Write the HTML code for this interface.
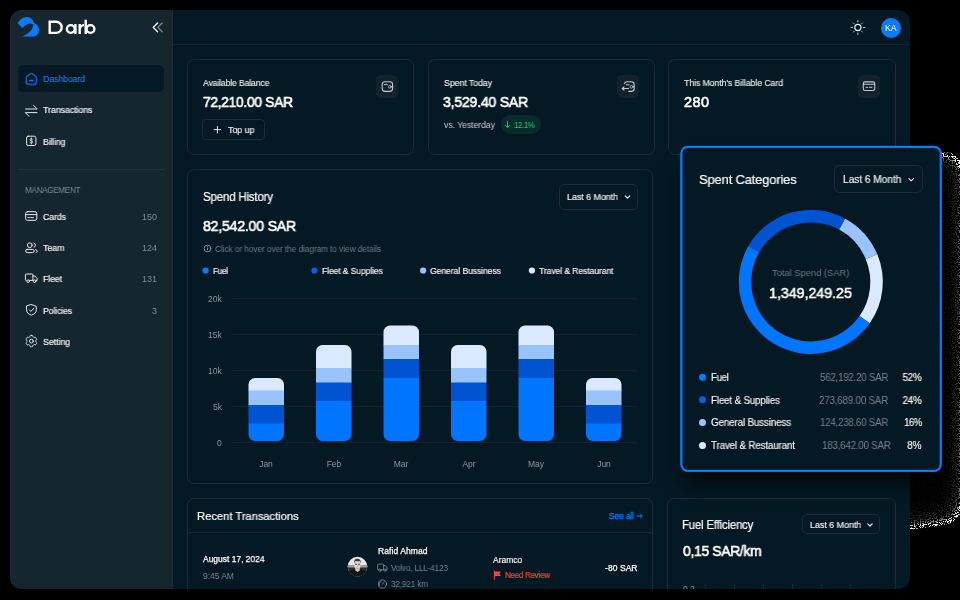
<!DOCTYPE html>
<html><head><meta charset="utf-8"><title>Darb</title><style>
html,body{margin:0;padding:0;background:#000;}
body{width:960px;height:600px;position:relative;overflow:hidden;font-family:"Liberation Sans",sans-serif;}
#app{position:absolute;left:0;top:0;width:960px;height:600px;clip-path:inset(10px 50px 11px 10px round 12px);background:#041923;}
.a{position:absolute;box-sizing:border-box}
.t{position:absolute;white-space:nowrap;will-change:transform}
#side{left:10px;top:10px;width:163px;height:579px;background:#15262f;border-right:1px solid #1d2e37}
.card{border:1px solid #1d2c34;border-radius:7px}
.ib{width:22px;height:22.5px;top:75px;border-radius:5px;background:#13232c}
.dd{border:1px solid #1d2d36;border-radius:5px}
svg{position:absolute;overflow:visible}
.ic{fill:none;stroke:#e6eaec;stroke-width:1;stroke-linecap:round;stroke-linejoin:round}
#panel{left:681px;top:146.500px;width:260px;height:325px;border-radius:8px;background:#041923;box-shadow:0 16px 22px -5px rgba(0,0,0,.72)}

</style></head><body>
<!--NOISE-->
<svg width="960" height="600" style="left:0;top:0" viewBox="0 0 960 600">
 <defs>
  <filter id="nz" x="850" y="120" width="140" height="440" filterUnits="userSpaceOnUse" color-interpolation-filters="sRGB">
   <feGaussianBlur in="SourceAlpha" stdDeviation="4.2" result="B1"/>
   <feComponentTransfer in="B1" result="P"><feFuncA type="linear" slope="-2" intercept="2"/></feComponentTransfer>
   <feGaussianBlur in="SourceAlpha" stdDeviation="13" result="B2"/>
   <feComponentTransfer in="B2" result="Q"><feFuncA type="linear" slope="-2" intercept="2"/></feComponentTransfer>
   <feComposite in="P" in2="Q" operator="arithmetic" k1="0" k2="1.5" k3="0.25" k4="0.02" result="I"/>
   <feTurbulence type="fractalNoise" baseFrequency="0.78" numOctaves="1" seed="11" result="T"/>
   <feColorMatrix in="T" type="matrix" values="0 0 0 0 1  0 0 0 0 1  0 0 0 0 1  40 0 0 0 -21" result="N"/>
   <feComposite in="N" in2="I" operator="arithmetic" k1="1" k2="0" k3="0" k4="0" result="D"/>
   <feFlood flood-color="#ffffff" result="W"/>
   <feComposite in="W" in2="D" operator="in" result="WD"/>
   <feComposite in="WD" in2="SourceAlpha" operator="in"/>
  </filter>
 </defs>
 <path d="M870,152.5 L948,152.5 C956,153 962,160 966,175 L966,495 C964,512 956,522 948,524 L932,527 L910,529.5 L870,529.5 Z" fill="#fff" filter="url(#nz)"/>
</svg><!--/NOISE-->
<div id="app" class="a">
  <div id="side" class="a"></div>
  <div class="a" style="left:173px;top:44px;width:737px;height:1px;background:#15262e"></div>
  <div class="a" style="left:18px;top:65px;width:146px;height:27px;border-radius:5px;background:#041923;border:1px solid #061b25"></div>
  <div class="a" style="left:18px;top:169px;width:147px;height:1px;background:#22333b"></div>

  <div id="kacirc" class="a" style="left:880.5px;top:17.5px;width:20px;height:20px;border-radius:10px;background:#0a7aff"></div>
  <!-- stat cards -->
  <div class="a card" style="left:187px;top:59px;width:227px;height:96px"></div>
  <div class="a card" style="left:428px;top:59px;width:227px;height:96px"></div>
  <div class="a card" style="left:668px;top:59px;width:228px;height:96px"></div>
  <div class="a ib" style="left:376px"></div>
  <div class="a ib" style="left:617px"></div>
  <div class="a ib" style="left:858px"></div>
  <div class="a dd" style="left:202px;top:119px;width:63px;height:21px;border-radius:4px"></div>
  <div class="a" style="left:500.7px;top:115px;width:40px;height:19px;border-radius:10px;background:#0a2a2b"></div>

  <!-- spend history -->
  <div class="a card" style="left:187px;top:169px;width:466px;height:315px"></div>
  <div class="a dd" style="left:559px;top:184px;width:78.5px;height:26px"></div>
  <svg width="960" height="600" style="left:0;top:0" viewBox="0 0 960 600">
    <g stroke="#12242d" stroke-width="1">
      <line x1="232.5" x2="637.5" y1="298.5" y2="298.5"/><line x1="232.5" x2="637.5" y1="334.5" y2="334.5"/>
      <line x1="232.5" x2="637.5" y1="370.5" y2="370.5"/><line x1="232.5" x2="637.5" y1="406.5" y2="406.5"/>
      <line x1="232.5" x2="637.5" y1="442.5" y2="442.5"/>
    </g>
    <defs>
      <clipPath id="b1"><rect x="248.5" y="378" width="35.5" height="63" rx="6.5"/></clipPath>
      <clipPath id="b2"><rect x="316" y="345" width="35.5" height="96" rx="6.5"/></clipPath>
      <clipPath id="b3"><rect x="383.5" y="325.5" width="35.5" height="115.5" rx="6.5"/></clipPath>
      <clipPath id="b4"><rect x="451" y="345" width="35.5" height="96" rx="6.5"/></clipPath>
      <clipPath id="b5"><rect x="518.5" y="325.5" width="35.5" height="115.5" rx="6.5"/></clipPath>
      <clipPath id="b6"><rect x="586" y="378" width="35.5" height="63" rx="6.5"/></clipPath>
    </defs>
    <g clip-path="url(#b1)"><rect x="248" y="378" width="37" height="13" fill="#dbe9ff"/><rect x="248" y="390.5" width="37" height="15" fill="#99c3ff"/><rect x="248" y="405" width="37" height="19" fill="#0054d1"/><rect x="248" y="423.5" width="37" height="18" fill="#0075ff"/></g>
    <g clip-path="url(#b6)"><rect x="585" y="378" width="37" height="13" fill="#dbe9ff"/><rect x="585" y="390.5" width="37" height="15" fill="#99c3ff"/><rect x="585" y="405" width="37" height="19" fill="#0054d1"/><rect x="585" y="423.5" width="37" height="18" fill="#0075ff"/></g>
    <g clip-path="url(#b2)"><rect x="315" y="344" width="37" height="24.5" fill="#dbe9ff"/><rect x="315" y="368" width="37" height="15" fill="#99c3ff"/><rect x="315" y="382.5" width="37" height="19" fill="#0054d1"/><rect x="315" y="401" width="37" height="41" fill="#0075ff"/></g>
    <g clip-path="url(#b4)"><rect x="450" y="344" width="37" height="24.5" fill="#dbe9ff"/><rect x="450" y="368" width="37" height="15" fill="#99c3ff"/><rect x="450" y="382.5" width="37" height="19" fill="#0054d1"/><rect x="450" y="401" width="37" height="41" fill="#0075ff"/></g>
    <g clip-path="url(#b3)"><rect x="383" y="325" width="37" height="20.5" fill="#dbe9ff"/><rect x="383" y="345" width="37" height="14.5" fill="#99c3ff"/><rect x="383" y="359" width="37" height="19.5" fill="#0054d1"/><rect x="383" y="378" width="37" height="64" fill="#0075ff"/></g>
    <g clip-path="url(#b5)"><rect x="518" y="325" width="37" height="20.5" fill="#dbe9ff"/><rect x="518" y="345" width="37" height="14.5" fill="#99c3ff"/><rect x="518" y="359" width="37" height="19.5" fill="#0054d1"/><rect x="518" y="378" width="37" height="64" fill="#0075ff"/></g>
    <!-- legend dots -->
    <circle cx="205.6" cy="270.5" r="3.1" fill="#0a7aff"/><circle cx="314.4" cy="270.5" r="3.1" fill="#0a5fe0"/>
    <circle cx="423.1" cy="270.5" r="3.1" fill="#99c3ff"/><circle cx="531.9" cy="270.5" r="3.1" fill="#dcebff"/>
  </svg>

  <!-- transactions -->
  <div class="a card" style="left:187px;top:498px;width:466px;height:130px"></div>
  <div class="a" style="left:188px;top:532px;width:464px;height:1px;background:#18282f"></div>
  <!-- fuel -->
  <div class="a card" style="left:667px;top:498px;width:229px;height:130px"></div>
  <div class="a dd" style="left:802.2px;top:514.4px;width:78px;height:20px"></div>
  <!--ICONS_UNDER-->
<svg width="960" height="600" style="left:0;top:0" viewBox="0 0 960 600">
 <!-- logo -->
 <path d="M17.5,23 C20,19 23,17 26.5,17 C30.5,17 33,19.5 34,23 C37,24 39,26.5 39,30 C39,34 36.5,36.5 33,36.5 L22,36.5 C28,34 33,30.5 33.3,24.5 C30,22 26,24 22.5,28 Z" fill="#0a7aff"/>
 <g fill="none" stroke="#fff" stroke-width="2.4">
  <path d="M49.7,21.7 H56.1 a5.6,5.6 0 0 1 5.600,5.600 a5.600,5.600 0 0 1 -5.600,5.600 H49.7 Z" stroke-linejoin="miter"/>
  <circle cx="70.8" cy="29" r="3.9"/><path d="M75.400,23.900 V34.100"/>
  <path d="M79.700,23.900 V34.100 M79.700,29.300 a4.200,4.200 0 0 1 4.300,-4.200"/>
  <path d="M85.700,19.800 V34.100"/><circle cx="90.500" cy="29" r="3.900"/>
 </g>
 <!-- collapse chevrons -->
 <path class="ic" d="M157.6,23 L153.2,27.35 L157.6,31.7" style="stroke:#fff;stroke-width:1.3"/>
 <path class="ic" d="M162.2,23 L157.8,27.35 L162.2,31.7" style="stroke:#7d8990;stroke-width:1.3"/>
 <!-- dashboard -->
 <path class="ic" d="M26.2,78.1 Q26.2,77 27.1,76.3 L29.9,74 Q31.3,72.9 32.7,74 L35.5,76.3 Q36.4,77 36.4,78.1 V81.9 a2.3,2.3 0 0 1 -2.3,2.3 H28.5 a2.3,2.3 0 0 1 -2.3,-2.3 Z M29.5,80.4 H33.1" style="stroke:#0a7aff;stroke-width:1.1"/>
 <!-- transactions -->
 <path class="ic" d="M25.6,109 H37.2 L33.6,105.4 M37,112.6 H25.3 L28.9,116.2"/>
 <!-- billing -->
 <rect class="ic" x="26.6" y="136.2" width="9.3" height="9.3" rx="1.6"/>
 <path class="ic" d="M32.6,139.3 q-0.3,-0.7 -1.3,-0.7 q-1.3,0 -1.3,1.1 q0,0.9 1.3,1.1 q1.4,0.2 1.4,1.2 q0,1.1 -1.4,1.1 q-1.1,0 -1.4,-0.8 M31.3,137.9 v6" style="stroke-width:.8"/>
 <!-- cards -->
 <rect class="ic" x="25.6" y="211.7" width="11.2" height="8.6" rx="1.8"/>
 <path class="ic" d="M25.6,214.6 H36.8 M28,217.6 h1.3 M30.8,217.6 h2.6"/>
 <!-- team -->
 <circle class="ic" cx="29.8" cy="245.2" r="2.4"/><rect class="ic" x="25.6" y="249.4" width="8.6" height="3.2" rx="1.6"/>
 <path class="ic" d="M33.8,243 a2.3,2.3 0 0 1 0.3,4.3 M35.6,249.6 q1.6,0.4 1.6,1.6 q0,1 -1.1,1.3"/>
 <!-- fleet -->
 <path class="ic" d="M26.4,280.4 h-0.3 a0.7,0.7 0 0 1 -0.7,-0.7 v-4.9 a0.8,0.8 0 0 1 0.8,-0.8 h5.9 a0.8,0.8 0 0 1 0.8,0.8 v5.6 h-3.2 M32.9,276 h2 l2.2,2.5 v1.9 h-0.8 "/>
 <circle class="ic" cx="28.2" cy="281.2" r="1.3"/><circle class="ic" cx="34.6" cy="281.2" r="1.3"/>
 <!-- policies -->
 <path class="ic" d="M31.4,304.6 l4.9,1.7 v3.5 c0,2.8 -2,4.3 -4.9,5.4 c-2.9,-1.1 -4.9,-2.6 -4.9,-5.4 v-3.5 Z M29.4,309.9 l1.5,1.5 l2.8,-3"/>
 <!-- setting -->
 <path class="ic" d="M31.40,335.40 L31.77,335.41 L32.14,335.45 L32.49,335.60 L32.72,336.17 L32.88,336.75 L33.12,336.94 L33.39,337.06 L33.65,337.20 L33.90,337.36 L34.14,337.53 L34.43,337.65 L35.01,337.49 L35.61,337.40 L35.92,337.63 L36.14,337.93 L36.34,338.25 L36.51,338.58 L36.67,338.92 L36.71,339.30 L36.33,339.78 L35.91,340.20 L35.86,340.51 L35.89,340.81 L35.90,341.10 L35.89,341.39 L35.86,341.69 L35.91,342.00 L36.33,342.42 L36.71,342.90 L36.67,343.28 L36.51,343.62 L36.34,343.95 L36.14,344.27 L35.92,344.57 L35.61,344.80 L35.01,344.71 L34.43,344.55 L34.14,344.67 L33.90,344.84 L33.65,345.00 L33.39,345.14 L33.12,345.26 L32.88,345.45 L32.72,346.03 L32.49,346.60 L32.14,346.75 L31.77,346.79 L31.40,346.80 L31.03,346.79 L30.66,346.75 L30.31,346.60 L30.08,346.03 L29.92,345.45 L29.68,345.26 L29.41,345.14 L29.15,345.00 L28.90,344.84 L28.66,344.67 L28.37,344.55 L27.79,344.71 L27.19,344.80 L26.88,344.57 L26.66,344.27 L26.46,343.95 L26.29,343.62 L26.13,343.28 L26.09,342.90 L26.47,342.42 L26.89,342.00 L26.94,341.69 L26.91,341.39 L26.90,341.10 L26.91,340.81 L26.94,340.51 L26.89,340.20 L26.47,339.78 L26.09,339.30 L26.13,338.92 L26.29,338.58 L26.46,338.25 L26.66,337.93 L26.88,337.63 L27.19,337.40 L27.79,337.49 L28.37,337.65 L28.66,337.53 L28.90,337.36 L29.15,337.20 L29.41,337.06 L29.68,336.94 L29.92,336.75 L30.08,336.17 L30.31,335.60 L30.66,335.45 L31.03,335.41Z"/><circle class="ic" cx="31.4" cy="341.1" r="1.9"/>
 <!-- sun -->
 <circle class="ic" cx="857.9" cy="27.5" r="3.1" style="stroke-width:1.2"/><g class="ic" style="stroke-width:1;stroke:#b4bcc1"><line x1="857.90" y1="22.00" x2="857.90" y2="20.50"/><line x1="861.65" y1="23.75" x2="862.50" y2="22.90"/><line x1="863.40" y1="27.50" x2="864.90" y2="27.50"/><line x1="861.65" y1="31.25" x2="862.50" y2="32.10"/><line x1="857.90" y1="33.00" x2="857.90" y2="34.50"/><line x1="854.15" y1="31.25" x2="853.30" y2="32.10"/><line x1="852.40" y1="27.50" x2="850.90" y2="27.50"/><line x1="854.15" y1="23.75" x2="853.30" y2="22.90"/></g>
 <!-- wallet -->
 <g class="ic" style="stroke:#c2c9cd;stroke-width:1.1">
  <rect x="382.2" y="81.7" width="10.4" height="9.7" rx="2.8"/><path d="M384.6,84.5 h2.6 M392.6,86.8 h-1.6"/><circle cx="389.8" cy="86.8" r="1.35" style="stroke-width:.8"/>
  <path d="M624.4,83.6 a2.6,2.6 0 0 1 2.4,-1.8 h4.6 a2.8,2.8 0 0 1 2.8,2.8 v4 a2.8,2.8 0 0 1 -2.8,2.8 h-2.6 M626.4,84.8 h2.6 M628.6,88.5 h-6.4 l1.8,-1.7 M622.2,88.5 l1.8,1.7 M634.2,86.8 h-1.6"/><circle cx="631.4" cy="86.8" r="1.35" style="stroke-width:.8"/>
  <rect x="863.3" y="81.9" width="11.4" height="8.6" rx="1.8"/><path d="M863.3,84.3 H874.7 M866,87.3 h1.6 M869.3,87.3 h2.6"/>
 </g>
 <!-- plus -->
 <path class="ic" d="M214.1,129.6 h6.6 M217.4,126.3 v6.6"/>
 <!-- green arrow -->
 <path class="ic" d="M507.5,121.4 V127.5 M505.2,125.3 L507.5,127.6 L509.8,125.3" style="stroke:#22c55e;stroke-width:1"/>
 <!-- info -->
 <circle class="ic" cx="207.5" cy="248.5" r="3.3" style="stroke:#8b979e;stroke-width:.9"/><path class="ic" d="M207.5,248 v2 M207.5,246.6 v.1" style="stroke:#8b979e;stroke-width:.9"/>
 <!-- chevrons down -->
 <path class="ic" d="M625.3,196 l2.2,2.2 l2.2,-2.2" style="stroke-width:1.2"/>
 <path class="ic" d="M867.8,523.8 l2.2,2.2 l2.2,-2.2" style="stroke-width:1.2"/>
 <!-- see all arrow -->
 <path class="ic" d="M637.2,516 h5 M640.3,514 l2,2 l-2,2" style="stroke:#0a7aff;stroke-width:1"/>
 <!-- truck small -->
 <g class="ic" style="stroke:#7a868e;stroke-width:.9">
  <path d="M378.6,569.9 h-0.4 a0.5,0.5 0 0 1 -0.5,-0.5 v-4.6 a0.7,0.7 0 0 1 0.7,-0.7 h4.5 a0.7,0.7 0 0 1 0.7,0.7 v5.1 h-2.5 M383.6,565.6 h1.6 l1.8,2.1 v2.2 h-0.6"/>
  <circle cx="379.9" cy="570.2" r="1.1"/><circle cx="385.1" cy="570.2" r="1.1"/>
  <circle cx="382.5" cy="584" r="4.1"/><path d="M382.5,584.3 l1.5,-2.2 M379.6,585.6 a3,3 0 0 1 1.4,-4.2"/>
 </g>
 <!-- flag -->
 <path d="M494.4,571.4 h6.6 l-1.6,2.3 l1.6,2.3 h-6.6 Z" fill="#f0483e"/><path d="M494.4,571 V579.4" stroke="#f0483e" stroke-width="1" stroke-linecap="round"/>
 <!-- avatar -->
 <defs><clipPath id="av"><circle cx="357.5" cy="566.6" r="9.8"/></clipPath></defs>
 <g clip-path="url(#av)">
  <rect x="347" y="556" width="21" height="21" fill="#e6e6e6"/>
  <rect x="347" y="565" width="21" height="3" fill="#9a9a9a"/>
  <rect x="347" y="567.500" width="21" height="10" fill="#2b2c2d"/>
  <path d="M347,577 v-5 q3.500,-2.300 7,-2.600 l3.500,2 l3.500,-2 q3.500,0.300 7,2.600 v5 Z" fill="#141516"/>
  <path d="M355.300,567.500 h4.400 v3 l-2.200,1.600 l-2.200,-1.600 Z" fill="#c9c9c9"/>
  <ellipse cx="357.400" cy="564.600" rx="3.500" ry="4.700" fill="#d2d2d2"/>
  <path d="M353.900,563.600 q-0.300,-4.800 3.500,-4.800 q3.800,0 3.500,4.800 q-0.600,-2.200 -1.400,-2.500 q-2.100,0.500 -4.200,0 q-0.800,0.300 -1.400,2.500 Z" fill="#3a3a3b"/>
  <path d="M355,564.300 h1.900 M358,564.300 h1.900" stroke="#3f3f40" stroke-width="0.900"/>
  <path d="M356.300,568.200 h2.200" stroke="#7d7d7d" stroke-width="0.600"/>
 </g>
 <!-- fuel ticks -->
 <g stroke="#1a2a32" stroke-width="1"><line x1="705.5" x2="705.5" y1="583.500" y2="590"/><line x1="734.500" x2="734.500" y1="583.500" y2="590"/><line x1="763.500" x2="763.500" y1="583.500" y2="590"/><line x1="792.500" x2="792.500" y1="583.500" y2="590"/><line x1="821.500" x2="821.500" y1="583.500" y2="590"/><line x1="850.500" x2="850.500" y1="583.500" y2="590"/></g>
</svg><!--/ICONS_UNDER-->
  <span class="t" id="t0" style="top:71.70px;font-size:9px;line-height:14px;color:#0a7aff;-webkit-text-stroke:0.15px #0a7aff;letter-spacing:-0.114px;transform:scaleX(0.9788);transform-origin:0 50%;left:42.8px;">Dashboard</span><span class="t" id="t1" style="top:103.40px;font-size:9px;line-height:14px;color:#f4f6f7;-webkit-text-stroke:0.15px #f4f6f7;letter-spacing:-0.077px;transform:scaleX(0.9832);transform-origin:0 50%;left:43px;">Transactions</span><span class="t" id="t2" style="top:134.80px;font-size:9px;line-height:14px;color:#f4f6f7;-webkit-text-stroke:0.15px #f4f6f7;letter-spacing:-0.126px;transform:scaleX(0.9674);transform-origin:0 50%;left:43px;">Billing</span><span class="t" id="t3" style="top:183.10px;font-size:8.5px;line-height:14px;color:#7d8a92;letter-spacing:-0.301px;transform:scaleX(0.9534);transform-origin:0 50%;left:25px;">MANAGEMENT</span><span class="t" id="t4" style="top:209.90px;font-size:9px;line-height:14px;color:#f4f6f7;-webkit-text-stroke:0.15px #f4f6f7;letter-spacing:-0.127px;transform:scaleX(0.9784);transform-origin:0 50%;left:42.5px;">Cards</span><span class="t" id="t5" style="top:209.80px;font-size:9px;line-height:14px;color:#7d8a92;right:803.20px;">150</span><span class="t" id="t6" style="top:241.10px;font-size:9px;line-height:14px;color:#f4f6f7;-webkit-text-stroke:0.15px #f4f6f7;letter-spacing:-0.119px;transform:scaleX(0.9835);transform-origin:0 50%;left:42.5px;">Team</span><span class="t" id="t7" style="top:241.00px;font-size:9px;line-height:14px;color:#7d8a92;right:803.20px;">124</span><span class="t" id="t8" style="top:272.30px;font-size:9px;line-height:14px;color:#f4f6f7;-webkit-text-stroke:0.15px #f4f6f7;letter-spacing:-0.127px;transform:scaleX(0.9740);transform-origin:0 50%;left:42.5px;">Fleet</span><span class="t" id="t9" style="top:272.20px;font-size:9px;line-height:14px;color:#7d8a92;right:803.20px;">131</span><span class="t" id="t10" style="top:303.70px;font-size:9px;line-height:14px;color:#f4f6f7;-webkit-text-stroke:0.15px #f4f6f7;letter-spacing:-0.130px;transform:scaleX(0.9698);transform-origin:0 50%;left:42.5px;">Policies</span><span class="t" id="t11" style="top:303.60px;font-size:9px;line-height:14px;color:#7d8a92;right:803.20px;">3</span><span class="t" id="t12" style="top:334.80px;font-size:9px;line-height:14px;color:#f4f6f7;-webkit-text-stroke:0.15px #f4f6f7;letter-spacing:-0.069px;transform:scaleX(0.9849);transform-origin:0 50%;left:42.5px;">Setting</span><span class="t" id="t13" style="top:20.80px;font-size:8.8px;line-height:14px;color:#fff;letter-spacing:-0.125px;transform:scaleX(0.9892);transform-origin:0 50%;left:884.8px;">KA</span><span class="t" id="t14" style="top:76.10px;font-size:9px;line-height:14px;color:#f4f6f7;-webkit-text-stroke:0.1px #f4f6f7;letter-spacing:-0.156px;transform:scaleX(0.9638);transform-origin:0 50%;left:203px;">Available Balance</span><span class="t" id="t15" style="top:90.57px;font-size:14.5px;line-height:23px;color:#fff;-webkit-text-stroke:0.6px #fff;letter-spacing:-0.348px;transform:scaleX(0.9556);transform-origin:0 50%;left:202.8px;">72,210.00 SAR</span><span class="t" id="t16" style="top:122.70px;font-size:9px;line-height:14px;color:#f4f6f7;-webkit-text-stroke:0.15px #f4f6f7;letter-spacing:-0.073px;transform:scaleX(0.9863);transform-origin:0 50%;left:228.2px;">Top up</span><span class="t" id="t17" style="top:76.10px;font-size:9px;line-height:14px;color:#f4f6f7;-webkit-text-stroke:0.1px #f4f6f7;letter-spacing:-0.084px;transform:scaleX(0.9829);transform-origin:0 50%;left:443.6px;">Spent Today</span><span class="t" id="t18" style="top:90.57px;font-size:14.5px;line-height:23px;color:#fff;-webkit-text-stroke:0.6px #fff;letter-spacing:-0.227px;transform:scaleX(0.9715);transform-origin:0 50%;left:443.4px;">3,529.40 SAR</span><span class="t" id="t19" style="top:117.70px;font-size:9px;line-height:14px;color:#c3cacf;letter-spacing:-0.106px;transform:scaleX(0.9756);transform-origin:0 50%;left:443.6px;">vs. Yesterday</span><span class="t" id="t20" style="top:117.70px;font-size:8.8px;line-height:14px;color:#22c55e;-webkit-text-stroke:0.1px #22c55e;letter-spacing:-0.519px;transform:scaleX(0.9092);transform-origin:0 50%;left:514.2px;">12.1%</span><span class="t" id="t21" style="top:76.10px;font-size:9px;line-height:14px;color:#f4f6f7;-webkit-text-stroke:0.1px #f4f6f7;letter-spacing:-0.105px;transform:scaleX(0.9741);transform-origin:0 50%;left:684.3px;">This Month's Billable Card</span><span class="t" id="t22" style="top:90.57px;font-size:14.5px;line-height:23px;color:#fff;-webkit-text-stroke:0.6px #fff;letter-spacing:0.398px;left:684.1px;">280</span><span class="t" id="t23" style="top:187.84px;font-size:12px;line-height:19px;color:#fff;-webkit-text-stroke:0.2px #fff;letter-spacing:-0.224px;transform:scaleX(0.9630);transform-origin:0 50%;left:202.5px;">Spend History</span><span class="t" id="t24" style="top:214.87px;font-size:14.5px;line-height:23px;color:#fff;-webkit-text-stroke:0.6px #fff;letter-spacing:-0.215px;transform:scaleX(0.9731);transform-origin:0 50%;left:203px;">82,542.00 SAR</span><span class="t" id="t25" style="top:241.70px;font-size:8.5px;line-height:14px;color:#707d85;letter-spacing:-0.083px;transform:scaleX(0.9775);transform-origin:0 50%;left:215px;">Click or hover over the diagram to view details</span><span class="t" id="t26" style="top:190.10px;font-size:9px;line-height:14px;color:#f4f6f7;-webkit-text-stroke:0.15px #f4f6f7;letter-spacing:-0.047px;transform:scaleX(0.9900);transform-origin:0 50%;left:567px;">Last 6 Month</span><span class="t" id="t27" style="top:263.70px;font-size:9px;line-height:14px;color:#f4f6f7;-webkit-text-stroke:0.15px #f4f6f7;letter-spacing:-0.419px;transform:scaleX(0.9226);transform-origin:0 50%;left:213px;">Fuel</span><span class="t" id="t28" style="top:263.70px;font-size:9px;line-height:14px;color:#f4f6f7;-webkit-text-stroke:0.15px #f4f6f7;letter-spacing:-0.158px;transform:scaleX(0.9624);transform-origin:0 50%;left:321.75px;">Fleet &amp; Supplies</span><span class="t" id="t29" style="top:263.70px;font-size:9px;line-height:14px;color:#f4f6f7;-webkit-text-stroke:0.15px #f4f6f7;letter-spacing:-0.142px;transform:scaleX(0.9690);transform-origin:0 50%;left:430px;">General Bussiness</span><span class="t" id="t30" style="top:263.70px;font-size:9px;line-height:14px;color:#f4f6f7;-webkit-text-stroke:0.15px #f4f6f7;letter-spacing:-0.145px;transform:scaleX(0.9663);transform-origin:0 50%;left:539px;">Travel &amp; Restaurant</span><span class="t" id="t31" style="top:291.60px;font-size:8.5px;line-height:14px;color:#8b979e;right:738.00px;">20k</span><span class="t" id="t32" style="top:327.60px;font-size:8.5px;line-height:14px;color:#8b979e;right:738.00px;">15k</span><span class="t" id="t33" style="top:363.60px;font-size:8.5px;line-height:14px;color:#8b979e;right:738.00px;">10k</span><span class="t" id="t34" style="top:399.60px;font-size:8.5px;line-height:14px;color:#8b979e;right:738.00px;">5k</span><span class="t" id="t35" style="top:435.60px;font-size:8.5px;line-height:14px;color:#8b979e;right:738.00px;">0</span><span class="t" id="t36" style="top:457.10px;font-size:8.5px;line-height:14px;color:#8b979e;left:216.25px;width:100px;text-align:center;">Jan</span><span class="t" id="t37" style="top:457.10px;font-size:8.5px;line-height:14px;color:#8b979e;left:283.75px;width:100px;text-align:center;">Feb</span><span class="t" id="t38" style="top:457.10px;font-size:8.5px;line-height:14px;color:#8b979e;left:351.25px;width:100px;text-align:center;">Mar</span><span class="t" id="t39" style="top:457.10px;font-size:8.5px;line-height:14px;color:#8b979e;left:418.75px;width:100px;text-align:center;">Apr</span><span class="t" id="t40" style="top:457.10px;font-size:8.5px;line-height:14px;color:#8b979e;left:486.25px;width:100px;text-align:center;">May</span><span class="t" id="t41" style="top:457.10px;font-size:8.5px;line-height:14px;color:#8b979e;left:553.75px;width:100px;text-align:center;">Jun</span><span class="t" id="t42" style="top:507.23px;font-size:11.4px;line-height:18px;color:#fff;-webkit-text-stroke:0.2px #fff;letter-spacing:-0.057px;transform:scaleX(0.9901);transform-origin:0 50%;left:197.3px;">Recent Transactions</span><span class="t" id="t43" style="top:509.30px;font-size:8.5px;line-height:14px;color:#0a7aff;-webkit-text-stroke:0.35px #0a7aff;letter-spacing:-0.083px;transform:scaleX(0.9804);transform-origin:0 50%;left:609px;">See all</span><span class="t" id="t44" style="top:552.10px;font-size:8.5px;line-height:14px;color:#fff;-webkit-text-stroke:0.25px #fff;letter-spacing:-0.015px;transform:scaleX(0.9966);transform-origin:0 50%;left:202.5px;">August 17, 2024</span><span class="t" id="t45" style="top:568.60px;font-size:8.5px;line-height:14px;color:#76838b;letter-spacing:-0.057px;transform:scaleX(0.9889);transform-origin:0 50%;left:202.5px;">9:45 AM</span><span class="t" id="t46" style="top:543.80px;font-size:8.5px;line-height:14px;color:#fff;-webkit-text-stroke:0.25px #fff;letter-spacing:0.083px;left:377.5px;">Rafid Ahmad</span><span class="t" id="t47" style="top:560.60px;font-size:8.5px;line-height:14px;color:#76838b;letter-spacing:-0.159px;transform:scaleX(0.9624);transform-origin:0 50%;left:390.5px;">Volvo, LLL-4123</span><span class="t" id="t48" style="top:576.90px;font-size:8.5px;line-height:14px;color:#76838b;letter-spacing:-0.169px;transform:scaleX(0.9648);transform-origin:0 50%;left:390.5px;">32,921 km</span><span class="t" id="t49" style="top:552.60px;font-size:8.5px;line-height:14px;color:#fff;-webkit-text-stroke:0.15px #fff;letter-spacing:-0.030px;transform:scaleX(0.9949);transform-origin:0 50%;left:493px;">Aramco</span><span class="t" id="t50" style="top:568.30px;font-size:8.5px;line-height:14px;color:#f0483e;-webkit-text-stroke:0.2px #f0483e;letter-spacing:-0.278px;transform:scaleX(0.9418);transform-origin:0 50%;left:505px;">Need Review</span><span class="t" id="t51" style="top:560.60px;font-size:8.5px;line-height:14px;color:#fff;-webkit-text-stroke:0.25px #fff;letter-spacing:0.062px;left:605px;">-80 SAR</span><span class="t" id="t52" style="top:515.54px;font-size:12px;line-height:19px;color:#fff;-webkit-text-stroke:0.2px #fff;letter-spacing:-0.229px;transform:scaleX(0.9570);transform-origin:0 50%;left:682.4px;">Fuel Efficiency</span><span class="t" id="t53" style="top:540.07px;font-size:14.5px;line-height:23px;color:#fff;-webkit-text-stroke:0.6px #fff;letter-spacing:-0.341px;transform:scaleX(0.9584);transform-origin:0 50%;left:682.6px;">0,15 SAR/km</span><span class="t" id="t54" style="top:517.50px;font-size:9px;line-height:14px;color:#f4f6f7;-webkit-text-stroke:0.15px #f4f6f7;letter-spacing:-0.038px;transform:scaleX(0.9919);transform-origin:0 50%;left:809.8px;">Last 6 Month</span><span class="t" id="t55" style="top:581.90px;font-size:8.5px;line-height:14px;color:#8b979e;letter-spacing:-0.082px;transform:scaleX(0.9859);transform-origin:0 50%;left:683px;">0.2</span>
</div>

<div id="panel" class="a"></div>
<svg width="960" height="600" style="left:0;top:0" viewBox="0 0 960 600"><rect x="681.3" y="146.9" width="259.5" height="324" rx="6.6" fill="none" stroke="#0a7aff" stroke-width="2.2"/></svg>
<div class="a dd" style="left:834.2px;top:165.4px;width:88.4px;height:27.8px;border-radius:6px"></div>
<svg width="960" height="600" style="left:0;top:0" viewBox="0 0 960 600">
  <path d="M748.45,245.90 A72,72 0 0 1 845.16,218.63 L839.19,229.61 A59.5,59.5 0 0 0 759.27,252.15 Z" fill="#0054d1"/><path d="M845.16,218.63 A72,72 0 0 1 877.32,254.35 L865.77,259.13 A59.5,59.5 0 0 0 839.19,229.61 Z" fill="#99c3ff"/><path d="M877.32,254.35 A72,72 0 0 1 869.78,323.20 L859.54,316.03 A59.5,59.5 0 0 0 865.77,259.13 Z" fill="#dbe9ff"/><path d="M869.78,323.20 A72,72 0 0 1 748.45,245.90 L759.27,252.15 A59.5,59.5 0 0 0 859.54,316.03 Z" fill="#0075ff"/>
  <circle cx="702.5" cy="377.3" r="3.5" fill="#0a7aff"/><circle cx="702.5" cy="399.8" r="3.5" fill="#0a5fe0"/>
  <circle cx="702.5" cy="422.4" r="3.5" fill="#99c3ff"/><circle cx="702.5" cy="445.4" r="3.5" fill="#dcebff"/>
</svg>
<!--ICONS_OVER-->
<svg width="960" height="600" style="left:0;top:0" viewBox="0 0 960 600">
 <path class="ic" d="M908.9,178.600 l2.300,2.300 l2.300,-2.300" style="stroke-width:1.100"/>
</svg><!--/ICONS_OVER-->
<span class="t" id="t56" style="top:168.56px;font-size:13.5px;line-height:22px;color:#fff;-webkit-text-stroke:0.2px #fff;letter-spacing:-0.221px;transform:scaleX(0.9672);transform-origin:0 50%;left:699.2px;">Spent Categories</span><span class="t" id="t57" style="top:171.52px;font-size:10.3px;line-height:16px;color:#f4f6f7;-webkit-text-stroke:0.15px #f4f6f7;letter-spacing:-0.056px;transform:scaleX(0.9896);transform-origin:0 50%;left:843px;">Last 6 Month</span><span class="t" id="t58" style="top:264.71px;font-size:9.8px;line-height:16px;color:#68747c;letter-spacing:-0.117px;transform:scaleX(0.9764);transform-origin:0 50%;left:772.1px;">Total Spend (SAR)</span><span class="t" id="t59" style="top:281.07px;font-size:15px;line-height:24px;color:#fff;-webkit-text-stroke:0.45px #fff;letter-spacing:-0.213px;transform:scaleX(0.9725);transform-origin:0 50%;left:769.2px;">1,349,249.25</span><span class="t" id="t60" style="top:370.02px;font-size:10.2px;line-height:16px;color:#f4f6f7;-webkit-text-stroke:0.15px #f4f6f7;letter-spacing:-0.338px;transform:scaleX(0.9461);transform-origin:0 50%;left:710.7px;">Fuel</span><span class="t" id="t61" style="top:370.02px;font-size:10.3px;line-height:16px;color:#75828a;letter-spacing:-0.272px;transform:scaleX(0.9509);transform-origin:0 50%;left:819.5px;">562,192.20 SAR</span><span class="t" id="t62" style="top:370.02px;font-size:10.2px;line-height:16px;color:#fff;-webkit-text-stroke:0.12px #fff;letter-spacing:-0.298px;transform:scaleX(0.9699);transform-origin:100% 50%;right:38.30px;">52%</span><span class="t" id="t63" style="top:392.52px;font-size:10.2px;line-height:16px;color:#f4f6f7;-webkit-text-stroke:0.15px #f4f6f7;letter-spacing:-0.176px;transform:scaleX(0.9630);transform-origin:0 50%;left:710.7px;">Fleet &amp; Supplies</span><span class="t" id="t64" style="top:392.52px;font-size:10.3px;line-height:16px;color:#75828a;letter-spacing:-0.241px;transform:scaleX(0.9567);transform-origin:0 50%;left:818.7px;">273,689.00 SAR</span><span class="t" id="t65" style="top:392.52px;font-size:10.2px;line-height:16px;color:#fff;-webkit-text-stroke:0.12px #fff;letter-spacing:-0.298px;transform:scaleX(0.9699);transform-origin:100% 50%;right:38.30px;">24%</span><span class="t" id="t66" style="top:415.12px;font-size:10.2px;line-height:16px;color:#f4f6f7;-webkit-text-stroke:0.15px #f4f6f7;letter-spacing:-0.166px;transform:scaleX(0.9679);transform-origin:0 50%;left:710.7px;">General Bussiness</span><span class="t" id="t67" style="top:415.12px;font-size:10.3px;line-height:16px;color:#75828a;letter-spacing:-0.276px;transform:scaleX(0.9501);transform-origin:0 50%;left:820px;">124,238.60 SAR</span><span class="t" id="t68" style="top:415.12px;font-size:10.2px;line-height:16px;color:#fff;-webkit-text-stroke:0.12px #fff;letter-spacing:-0.598px;transform:scaleX(0.9377);transform-origin:100% 50%;right:38.60px;">16%</span><span class="t" id="t69" style="top:438.12px;font-size:10.2px;line-height:16px;color:#f4f6f7;-webkit-text-stroke:0.15px #f4f6f7;letter-spacing:-0.170px;transform:scaleX(0.9649);transform-origin:0 50%;left:710.7px;">Travel &amp; Restaurant</span><span class="t" id="t70" style="top:438.12px;font-size:10.3px;line-height:16px;color:#75828a;letter-spacing:-0.257px;transform:scaleX(0.9538);transform-origin:0 50%;left:821.7px;">183,642.00 SAR</span><span class="t" id="t71" style="top:438.12px;font-size:10.2px;line-height:16px;color:#fff;-webkit-text-stroke:0.12px #fff;letter-spacing:-0.167px;transform:scaleX(0.9885);transform-origin:100% 50%;right:38.17px;">8%</span>

</body></html>
